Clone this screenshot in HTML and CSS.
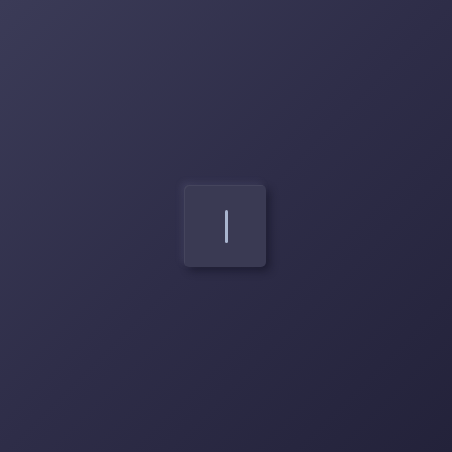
FILE: index.html
```html
<!DOCTYPE html>
<html>
<head>
<meta charset="utf-8">
<link rel="stylesheet" href="styles.css">
</head>
<body>
<main class="stage">
  <div class="key"><span class="bar"></span></div>
</main>
</body>
</html>
```
FILE: styles.css
```css
html, body { margin: 0; padding: 0; }
body {
  width: 452px;
  height: 452px;
  font-family: "Liberation Sans", sans-serif;
}
.stage {
  width: 452px;
  height: 452px;
  background: linear-gradient(135deg, #3b3b57 0%, #2e2d48 50%, #23223a 100%);
  display: flex;
  align-items: center;
  justify-content: center;
}
.key {
  width: 82px;
  height: 82px;
  margin: 0 2px 0 0;
  border-radius: 5px;
  background: #3a3a53;
  box-shadow: inset 1px 1px 0 rgba(255,255,255,0.06), -3px -3px 6px rgba(120,120,160,0.18), 4px 4px 8px rgba(10,10,25,0.45);
  display: flex;
  align-items: center;
  justify-content: center;
}
.bar {
  width: 3px;
  height: 33px;
  margin-left: 2px;
  border-radius: 1.5px;
  background: #a9b5cf;
}
```
